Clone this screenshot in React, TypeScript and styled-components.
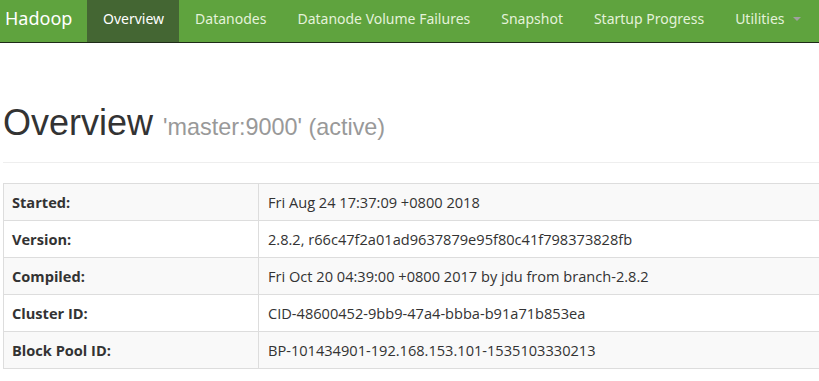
import React from 'react'
import styled, { createGlobalStyle } from 'styled-components'

const GlobalStyle = createGlobalStyle`
  html, body {
    margin: 0;
    padding: 0;
    background: #fff;
    overflow: hidden;
  }
  body {
    font-family: "Open Sans", "Noto Sans", sans-serif;
    color: #333;
  }
`

const navItems = [
  'Overview',
  'Datanodes',
  'Datanode Volume Failures',
  'Snapshot',
  'Startup Progress',
]

const rows = [
  ['Started:', 'Fri Aug 24 17:37:09 +0800 2018'],
  ['Version:', '2.8.2, r66c47f2a01ad9637879e95f80c41f798373828fb'],
  ['Compiled:', 'Fri Oct 20 04:39:00 +0800 2017 by jdu from branch-2.8.2'],
  ['Cluster ID:', 'CID-48600452-9bb9-47a4-bbba-b91a71b853ea'],
  ['Block Pool ID:', 'BP-101434901-192.168.153.101-1535103330213'],
]

const App = () => {
  return (
    <>
      <GlobalStyle />
      <Navbar>
        <Brand>Hadoop</Brand>
        <NavList>
          {navItems.map((item, i) => (
            <NavItem key={item} active={i === 0}>{item}</NavItem>
          ))}
          <NavItem>
            Utilities <Caret />
          </NavItem>
        </NavList>
      </Navbar>

      <Main>
        <PageHeader>
          <Title>
            Overview <Small>'master:9000' (active)</Small>
          </Title>
        </PageHeader>

        <Table>
          <tbody>
            {rows.map(([label, value], i) => (
              <Row key={label} striped={i % 2 === 0}>
                <Th>{label}</Th>
                <Td>{value}</Td>
              </Row>
            ))}
          </tbody>
        </Table>
      </Main>
    </>
  )
}
export default App

const Navbar = styled.div`
  display: flex;
  align-items: stretch;
  height: 42px;
  background: #5fa33e;
  border-bottom: 1px solid #1e2a18;
  font-family: "Noto Sans", "Open Sans", sans-serif;
  white-space: nowrap;
  overflow: hidden;
`

const Brand = styled.div`
  width: 87px;
  flex-shrink: 0;
  box-sizing: border-box;
  padding: 7px 0 0 5px;
  font-size: 18px;
  line-height: 22px;
  color: #fff;
`

const NavList = styled.div`
  display: flex;
  flex-shrink: 0;
`

const NavItem = styled.div<{ active?: boolean }>`
  display: flex;
  align-items: center;
  gap: 8px;
  padding: 0 15px 6px 16px;
  font-size: 14px;
  color: ${p => (p.active ? '#fff' : '#e4f2da')};
  background: ${p => (p.active ? '#446633' : 'transparent')};
`

const Caret = styled.span`
  display: inline-block;
  width: 0;
  height: 0;
  margin-top: 2px;
  border-top: 4px solid #a0a0a0;
  border-left: 4px solid transparent;
  border-right: 4px solid transparent;
`

const Main = styled.div`
  padding: 60px 0 0 3px;
  overflow: hidden;
`

const PageHeader = styled.div`
  padding-bottom: 9px;
  border-bottom: 1px solid #eee;
  margin-bottom: 20px;
`

const Title = styled.h1`
  margin: 0 0 10px;
  font-family: "Liberation Sans", Arial, sans-serif;
  font-size: 36px;
  font-weight: 400;
  line-height: 1.1;
  color: #333;
`

const Small = styled.small`
  font-size: 65%;
  color: #999;
`

const Table = styled.table`
  width: 860px;
  border-collapse: collapse;
  font-size: 14.6px;
`

const Row = styled.tr<{ striped?: boolean }>`
  background: ${p => (p.striped ? '#f9f9f9' : '#fff')};
`

const Th = styled.th`
  width: 238px;
  padding: 8px;
  height: 20px;
  line-height: 20px;
  text-align: left;
  font-weight: 700;
  border: 1px solid #ddd;
`

const Td = styled.td`
  padding: 8px 9px;
  height: 20px;
  line-height: 20px;
  border: 1px solid #ddd;
`
